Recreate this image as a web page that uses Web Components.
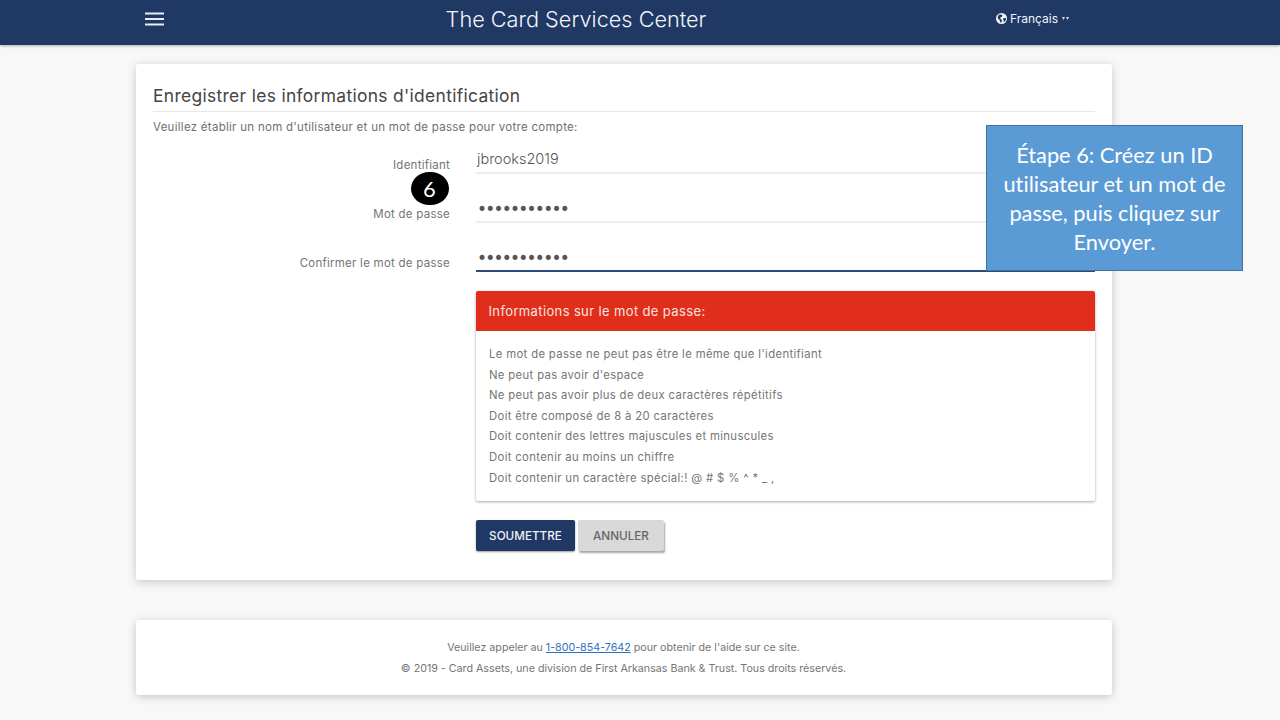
<!DOCTYPE html>
<html lang="fr">
<head>
<meta charset="utf-8">
<title>The Card Services Center</title>
<style>
  html, body { margin: 0; height: 100%; }
  body { background: #f8f8f8; font-family: Inter, "Liberation Sans", sans-serif; overflow: hidden; position: relative; }
</style>
</head>
<body>
<site-header></site-header>
<page-card style="margin-top:19px;height:516px">
  <credentials-form></credentials-form>
</page-card>
<page-card style="margin-top:40px;height:75px">
  <site-footer></site-footer>
</page-card>
<step-badge>6</step-badge>
<step-callout>Étape 6: Créez un ID utilisateur et un mot de passe, puis cliquez sur Envoyer.</step-callout>

<script>
class SiteHeader extends HTMLElement {
  constructor() {
    super();
    this.attachShadow({ mode: 'open' }).innerHTML = `
      <style>
        :host {
          display: grid;
          grid-template-columns: 164px 824px 1fr;
          align-items: center;
          height: 45px;
          box-sizing: border-box;
          padding-bottom: 8px;
          background: #1f3864;
          color: #f2f4f8;
          box-shadow: 0 1px 3px rgba(0,0,0,.3);
          position: relative;
        }
        .menu { display: block; margin-left: 145px; }
        .title { text-align: center; font-size: 21.7px; font-weight: 300; white-space: nowrap; }
        .lang { display: flex; align-items: center; gap: 3px; padding-left: 8px; font-size: 12px; font-weight: 400; }
        .caret { margin-left: 1px; }
      </style>
      <svg class="menu" width="19" height="14" viewBox="0 0 19 14" fill="#e9edf3" aria-hidden="true">
        <rect y="0.5" width="19" height="2"/><rect y="6" width="19" height="2"/><rect y="11.5" width="19" height="2"/>
      </svg>
      <div class="title">The Card Services Center</div>
      <div class="lang">
        <svg width="11" height="11" viewBox="0 0 24 24" aria-hidden="true">
          <circle cx="12" cy="12" r="12" fill="#f2f4f8"/>
          <path fill="#1f3864" d="M6 4l5-1 3 2-1 3-3 1-1 3 3 2 1 3-2 4-2-1-1-5-4-3 0-4zM16 11l5 0 1 3-3 5-2 0-1-4z"/>
        </svg>
        <span>Français</span>
        <svg class="caret" width="7" height="5" viewBox="0 0 7 5" fill="#d7dce6" aria-hidden="true">
          <path d="M0 1h3L1.500 4zM4 1h3L5.500 4z"/>
        </svg>
      </div>`;
  }
}
customElements.define('site-header', SiteHeader);

class PageCard extends HTMLElement {
  constructor() {
    super();
    this.attachShadow({ mode: 'open' }).innerHTML = `
      <style>
        :host {
          display: block;
          width: 976px;
          margin-left: 136px;
          box-sizing: border-box;
          background: #fff;
          border-radius: 3px;
          box-shadow: 0 2px 10px rgba(0,0,0,.2);
        }
      </style>
      <slot></slot>`;
  }
}
customElements.define('page-card', PageCard);

class FormRow extends HTMLElement {
  constructor() {
    super();
    const active = this.hasAttribute('active');
    this.attachShadow({ mode: 'open' }).innerHTML = `
      <style>
        :host {
          display: grid;
          grid-template-columns: 297px 619px;
          column-gap: 26px;
          height: 49px;
          align-items: end;
        }
        .label { text-align: right; font-size: 11.5px; letter-spacing: .25px; color: #757575; padding-bottom: 2px; white-space: nowrap; }
        .field {
          height: 32px;
          box-sizing: border-box;
          display: flex;
          align-items: center;
          padding: 2px 0 0 1px;
          font-size: 14.5px;
          font-weight: 300;
          color: #555;
          border-bottom: ${active ? '2px solid #2c4a7c' : '2px solid #eeeeee'};
        }
        .dots { font-family: "DejaVu Sans", sans-serif; font-size: 17px; letter-spacing: -1.76px; color: #555; font-weight: 400; padding-top: 4px; }
      </style>
      <div class="label"><slot name="label"></slot></div>
      <div class="field"><slot></slot></div>`;
    if (this.hasAttribute('password')) {
      this.shadowRoot.querySelector('.field').innerHTML = '<span class="dots">•••••••••••</span>';
    }
  }
}
customElements.define('form-row', FormRow);

class PasswordInfo extends HTMLElement {
  constructor() {
    super();
    this.attachShadow({ mode: 'open' }).innerHTML = `
      <style>
        :host {
          display: block;
          width: 619px;
          margin: 19px 0 0 323px;
          box-sizing: border-box;
          height: 210px;
          border-radius: 2px;
          background: #fff;
          box-shadow: 0 1px 3px rgba(0,0,0,.35);
        }
        .head {
          height: 40px;
          display: flex;
          align-items: center;
          padding-left: 12.500px;
          background: #e02e1b;
          color: #f9e4e0;
          font-size: 13px;
          letter-spacing: .37px;
          border-radius: 2px 2px 0 0;
        }
        ul { list-style: none; margin: 0; padding: 13px 13px 0; }
        li { height: 20.6px; line-height: 20.6px; font-size: 11.3px; letter-spacing: .35px; color: #757575; white-space: nowrap; }
      </style>
      <div class="head">Informations sur le mot de passe:</div>
      <ul>
        <li>Le mot de passe ne peut pas être le même que l'identifiant</li>
        <li>Ne peut pas avoir d'espace</li>
        <li>Ne peut pas avoir plus de deux caractères répétitifs</li>
        <li>Doit être composé de 8 à 20 caractères</li>
        <li>Doit contenir des lettres majuscules et minuscules</li>
        <li>Doit contenir au moins un chiffre</li>
        <li>Doit contenir un caractère spécial:! @ # $ % ^ * _ ,</li>
      </ul>`;
  }
}
customElements.define('password-info', PasswordInfo);

class CredentialsForm extends HTMLElement {
  constructor() {
    super();
    this.attachShadow({ mode: 'open' }).innerHTML = `
      <style>
        :host { display: block; padding: 0 17px; }
        h2 {
          margin: 0;
          padding-top: 20px;
          height: 48px;
          box-sizing: border-box;
          border-bottom: 1px solid #e8e8e8;
          font-size: 17.4px;
          letter-spacing: .33px;
          line-height: 24px;
          font-weight: 400;
          color: #444;
        }
        p { margin: 0; padding-top: 8px; height: 14px; line-height: 14px; font-size: 11.5px; letter-spacing: .28px; color: #707070; }
        .rows { margin-top: -9px; }
        .actions { display: flex; gap: 3px; margin: 19px 0 0 323px; }
        button {
          height: 31px;
          border: 0;
          border-radius: 2px;
          font: 500 11.7px Inter, "Liberation Sans", sans-serif;
          box-shadow: 0 1px 2px rgba(0,0,0,.4);
        }
        .ok { width: 99px; background: #1f3864; color: #eef1f6; }
        .no { width: 86px; background: #d9d9d9; color: #666; box-shadow: 1px 2px 2px rgba(0,0,0,.35); }
      </style>
      <h2>Enregistrer les informations d'identification</h2>
      <p>Veuillez établir un nom d'utilisateur et un mot de passe pour votre compte:</p>
      <div class="rows">
        <form-row><span slot="label">Identifiant</span>jbrooks2019</form-row>
        <form-row password><span slot="label">Mot de passe</span></form-row>
        <form-row password active><span slot="label">Confirmer le mot de passe</span></form-row>
      </div>
      <password-info></password-info>
      <div class="actions"><button class="ok">SOUMETTRE</button><button class="no">ANNULER</button></div>`;
  }
}
customElements.define('credentials-form', CredentialsForm);

class SiteFooter extends HTMLElement {
  constructor() {
    super();
    this.attachShadow({ mode: 'open' }).innerHTML = `
      <style>
        :host { display: block; padding-top: 18px; text-align: center; font-size: 10.7px; line-height: 20.5px; color: #757575; }
        div { padding-right: 1px; white-space: nowrap; }
        a { color: #2f6fc0; text-decoration: underline; }
      </style>
      <div>Veuillez appeler au <a href="#">1-800-854-7642</a> pour obtenir de l'aide sur ce site.</div>
      <div>© 2019 - Card Assets, une division de First Arkansas Bank &amp; Trust. Tous droits réservés.</div>`;
  }
}
customElements.define('site-footer', SiteFooter);

class StepBadge extends HTMLElement {
  constructor() {
    super();
    this.attachShadow({ mode: 'open' }).innerHTML = `
      <style>
        :host {
          position: absolute;
          left: 411px;
          top: 172px;
          width: 38px;
          height: 33px;
          box-sizing: border-box;
          padding-right: 1px;
          border-radius: 19px / 17px;
          background: #000;
          color: #fff;
          display: flex;
          align-items: center;
          justify-content: center;
          font: 400 22px Lato, sans-serif;
        }
      </style>
      <slot></slot>`;
  }
}
customElements.define('step-badge', StepBadge);

class StepCallout extends HTMLElement {
  constructor() {
    super();
    this.attachShadow({ mode: 'open' }).innerHTML = `
      <style>
        :host {
          position: absolute;
          left: 986px;
          top: 125px;
          width: 257px;
          height: 146px;
          box-sizing: border-box;
          padding: 14px 6px 0;
          background: #5b9bd5;
          border: 1px solid #41719c;
          color: #fff;
          text-align: center;
          font: 400 21.8px/29px Lato, sans-serif;
          font-variant-ligatures: none;
        }
      </style>
      <slot></slot>`;
  }
}
customElements.define('step-callout', StepCallout);
</script>
</body>
</html>
